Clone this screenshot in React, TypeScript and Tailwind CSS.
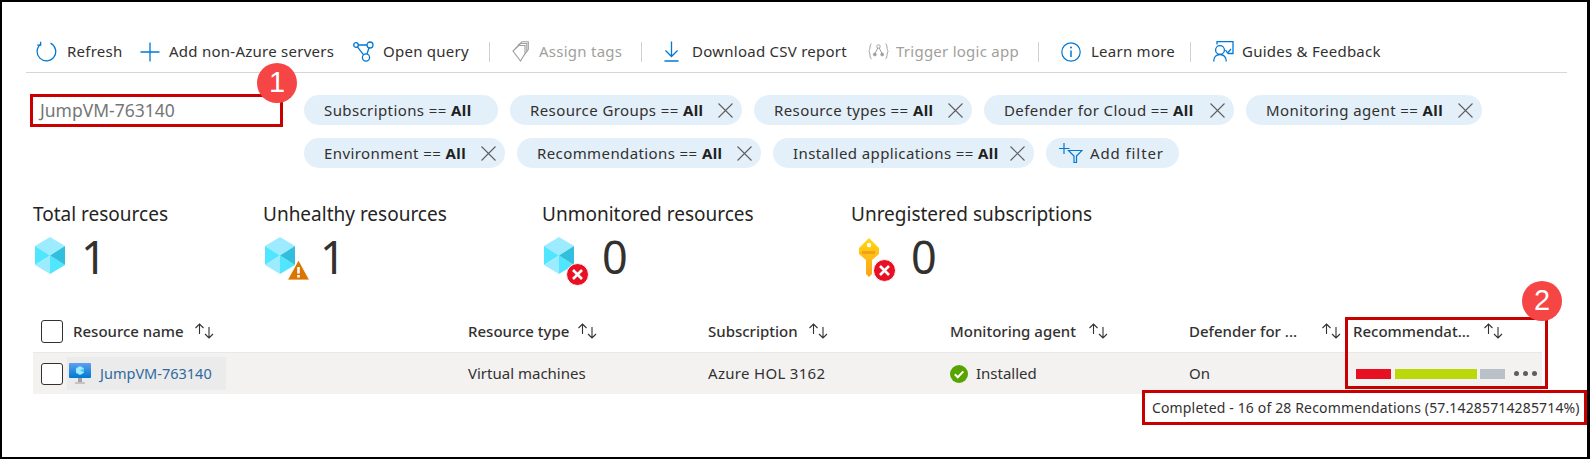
import React from 'react';

const font = { fontFamily: '"Noto Sans", sans-serif' };

const RefreshIcon = () => (
  <svg width="21" height="21" viewBox="0 0 21 21" fill="none" stroke="#0078d4" strokeWidth="1.3">
    <path d="M14.5 2.2A9.3 9.3 0 1 1 5 3" />
    <path d="M4.6 0.8V4.2H1.2" />
  </svg>
);

const PlusIcon = () => (
  <svg width="20" height="20" viewBox="0 0 20 20" stroke="#0078d4" strokeWidth="1.3">
    <path d="M10 0.5V19.5M0.5 10H19.5" />
  </svg>
);

const QueryIcon = () => (
  <svg width="21" height="21" viewBox="0 0 21 21" fill="none" stroke="#0078d4" strokeWidth="1.3">
    <circle cx="3" cy="4" r="2.3" />
    <circle cx="17" cy="4" r="3" />
    <circle cx="13" cy="16.5" r="3.6" />
    <path d="M5.3 4H14M4.4 5.8L10.6 13.8M16 6.8L14 13" />
  </svg>
);

const TagIcon = () => (
  <svg width="17" height="21" viewBox="0 0 17 21" fill="none" stroke="#a19f9d" strokeWidth="1.1">
    <path d="M1 10L6.5 4.5H13V12.5L8.5 20Z" />
    <path d="M3.5 7.5L8.5 2.5H14.8V10.5L13 13" />
    <path d="M6 4.5L10 0.7H16.3V8.5L14.8 10.5" />
  </svg>
);

const DownloadIcon = () => (
  <svg width="15" height="21" viewBox="0 0 15 21" fill="none" stroke="#0078d4" strokeWidth="1.3">
    <path d="M7.5 0.5V15.5M1.5 9.5L7.5 15.5L13.5 9.5" />
    <path d="M0.5 20H14.5" strokeWidth="1.5" />
  </svg>
);

const TriggerIcon = () => (
  <svg width="21" height="17" viewBox="0 0 21 17" fill="none" stroke="#a19f9d" strokeWidth="1">
    <path d="M3.5 0.8C1.5 0.8 2.5 7 0.8 8.2C2.5 9.5 1.5 15.8 3.5 15.8" />
    <path d="M17.5 0.8C19.5 0.8 18.5 7 20.2 8.2C18.5 9.5 19.5 15.8 17.5 15.8" />
    <circle cx="10.5" cy="3.5" r="1.7" />
    <circle cx="6.8" cy="11.5" r="1.4" fill="#a19f9d" />
    <circle cx="14.2" cy="11.5" r="1.4" fill="#a19f9d" />
    <path d="M9.8 5L7.2 10M11.2 5L13.8 10" />
  </svg>
);

const InfoIcon = () => (
  <svg width="20" height="20" viewBox="0 0 20 20" fill="none" stroke="#0078d4" strokeWidth="1.2">
    <circle cx="10" cy="10" r="9.2" />
    <path d="M10 8.5V15" strokeWidth="1.5" />
    <circle cx="10" cy="5.6" r="1" fill="#0078d4" stroke="none" />
  </svg>
);

const GuidesIcon = () => (
  <svg width="21" height="21" viewBox="0 0 21 21" fill="none" stroke="#0078d4" strokeWidth="1.3">
    <path d="M4 3.5V0.7H20V12.5H15" />
    <circle cx="7" cy="9" r="4.4" />
    <path d="M0.7 20.5C0.7 16 3.5 13.5 7 13.5C10.5 13.5 13.3 16 13.3 20.5" />
    <path d="M12.5 9L14.5 12L18 8" />
  </svg>
);

const CloseIcon = () => (
  <svg width="15" height="15" viewBox="0 0 15 15" stroke="#605e5c" strokeWidth="1.1" className="shrink-0">
    <path d="M0.5 0.5L14.5 14.5M14.5 0.5L0.5 14.5" />
  </svg>
);

const AddFilterIcon = () => (
  <svg width="24" height="20" viewBox="0 0 24 20" fill="none" stroke="#0078d4" strokeWidth="1.2" className="shrink-0">
    <path d="M5 0V11M0 5.5H10.5" />
    <path d="M9.5 7.5H23L17.5 13V19.5H15V13Z" />
  </svg>
);

const SortIcon = () => (
  <svg width="21" height="16" viewBox="0 0 21 16" fill="none" stroke="#323130" strokeWidth="1.1" className="shrink-0">
    <path d="M5.5 11V1M1.5 5L5.5 1L9.5 5" />
    <path d="M15 4V15M11 11L15 15L19 11" />
  </svg>
);

const Cube = ({ className = '' }: { className?: string }) => (
  <svg width="32" height="37" viewBox="0 0 32 37" className={className}>
    <polygon points="16,0 31,9 16,18.5 1,9" fill="#9cebff" />
    <polygon points="1,9 16,18.5 1,28" fill="#50e6ff" />
    <polygon points="1,28 16,18.5 16,37" fill="#9cebff" />
    <polygon points="16,18.5 31,28 16,37" fill="#50e6ff" />
    <polygon points="31,9 31,28 16,18.5" fill="#32bedd" />
  </svg>
);

const ErrorBadge = ({ className = '' }: { className?: string }) => (
  <svg width="23" height="23" viewBox="0 0 23 23" className={className}>
    <circle cx="11.5" cy="11.5" r="11" fill="#e81123" stroke="#fff" strokeWidth="1" />
    <path d="M7 7L16 16M16 7L7 16" stroke="#fff" strokeWidth="2.6" />
  </svg>
);

const WarnBadge = () => (
  <svg width="23" height="22" viewBox="0 0 23 22" className="absolute left-[23px] top-[22px]">
    <path d="M11.5 1L22.5 21H0.5Z" fill="#db7500" stroke="#fff" strokeWidth="0.8" />
    <path d="M11.5 8V14.5M11.5 16V18.5" stroke="#fff" strokeWidth="2.6" />
  </svg>
);

const KeyIcon = () => (
  <svg width="24" height="40" viewBox="0 0 24 40">
    <defs>
      <linearGradient id="keyFill" x1="0" y1="0" x2="0" y2="1">
        <stop offset="0" stopColor="#ffd70f" />
        <stop offset="1" stopColor="#fea11b" />
      </linearGradient>
    </defs>
    <path d="M12 1L22 11V17L15 23V37L12 40L9 37V23L2 17V11Z" fill="url(#keyFill)" />
    <circle cx="12" cy="8" r="2.2" fill="#fff" />
    <path d="M5 14H18V17H5Z" fill="#f59e1a" />
  </svg>
);

const VmIcon = () => (
  <svg width="22" height="22" viewBox="0 0 22 22" className="shrink-0">
    <defs>
      <linearGradient id="vmFill" x1="0" y1="0" x2="0" y2="1">
        <stop offset="0" stopColor="#5ea0ef" />
        <stop offset="1" stopColor="#0078d4" />
      </linearGradient>
    </defs>
    <rect x="0" y="0" width="22" height="15" rx="1" fill="url(#vmFill)" />
    <polygon points="11,3 15,5.3 15,9.7 11,12 7,9.7 7,5.3" fill="#9cebff" />
    <polygon points="15,5.3 15,9.7 11,7.5" fill="#50c8e8" />
    <rect x="9" y="15" width="4" height="4" fill="#a3a3a3" />
    <rect x="6" y="19" width="10" height="2" rx="0.5" fill="#c4c4c4" />
  </svg>
);

const CheckIcon = () => (
  <svg width="18" height="18" viewBox="0 0 18 18" className="shrink-0">
    <circle cx="9" cy="9" r="9" fill="#57a300" />
    <path d="M4.8 9.2L7.8 12.2L13.3 6.4" fill="none" stroke="#fff" strokeWidth="2" />
  </svg>
);

const Marker = ({ n, className }: { n: string; className: string }) => (
  <div
    className={`absolute flex h-10 w-10 items-center justify-center rounded-full bg-[#f54545] text-[29px] text-white ${className}`}
    style={{ fontFamily: '"Liberation Sans", sans-serif' }}
  >
    {n}
  </div>
);

const toolbar = [
  { label: 'Refresh', icon: <RefreshIcon />, box: 'w-[104px]', gap: 'gap-[10px]' },
  { label: 'Add non-Azure servers', icon: <PlusIcon />, box: 'w-[213px]', gap: 'gap-[9px]' },
  { label: 'Open query', icon: <QueryIcon />, box: 'w-[136px]', gap: 'gap-[9px]' },
  { sep: true },
  { label: 'Assign tags', icon: <TagIcon />, box: 'w-[129px]', gap: 'gap-[10px]', off: true },
  { sep: true },
  { label: 'Download CSV report', icon: <DownloadIcon />, box: 'w-[204px]', gap: 'gap-[13px]' },
  { label: 'Trigger logic app', icon: <TriggerIcon />, box: 'w-[170px]', gap: 'gap-[7px]', off: true },
  { sep: true },
  { label: 'Learn more', icon: <InfoIcon />, box: 'w-[129px]', gap: 'gap-[10px]' },
  { sep: true },
  { label: 'Guides & Feedback', icon: <GuidesIcon />, box: 'w-[180px]', gap: 'gap-[8px]' },
];

const filters = [
  { name: 'Subscriptions', box: 'w-[194px]', fixed: true },
  { name: 'Resource Groups', box: 'w-[232px]' },
  { name: 'Resource types', box: 'w-[218px]' },
  { name: 'Defender for Cloud', box: 'w-[250px]' },
  { name: 'Monitoring agent', box: 'w-[236px]' },
  { name: 'Environment', box: 'w-[201px]' },
  { name: 'Recommendations', box: 'w-[244px]' },
  { name: 'Installed applications', box: 'w-[261px]' },
];

const stats = [
  { title: 'Total resources', value: '1', box: 'w-[230px]', gap: 'gap-[15px]', icon: <Cube /> },
  {
    title: 'Unhealthy resources',
    value: '1',
    box: 'w-[279px]',
    gap: 'gap-[24px]',
    icon: (
      <div className="relative h-[44px] w-[32px]">
        <Cube />
        <WarnBadge />
      </div>
    ),
  },
  {
    title: 'Unmonitored resources',
    value: '0',
    box: 'w-[309px]',
    gap: 'gap-[27px]',
    icon: (
      <div className="relative h-[44px] w-[32px]">
        <Cube />
        <ErrorBadge className="absolute left-[23px] top-[26px]" />
      </div>
    ),
  },
  {
    title: 'Unregistered subscriptions',
    value: '0',
    box: 'w-[300px]',
    gap: 'gap-[30px]',
    icon: (
      <div className="relative ml-[5px] h-[44px] w-[24px]">
        <KeyIcon />
        <ErrorBadge className="absolute left-[16px] top-[22px]" />
      </div>
    ),
  },
];

const columns = [
  { label: 'Resource type', box: 'w-[240px]', gap: 'gap-[8px]' },
  { label: 'Subscription', box: 'w-[242px]', gap: 'gap-[10px]' },
  { label: 'Monitoring agent', box: 'w-[239px]', gap: 'gap-[12px]' },
  { label: 'Defender for ...', box: 'w-[164px]', gap: 'gap-[24px]' },
  { label: 'Recommendat...', box: 'w-[190px]', gap: 'gap-[13px]' },
];

export default function App() {
  return (
    <div
      className="relative h-[459px] w-[1590px] overflow-hidden border-y-2 border-r-[3px] border-l-2 border-black bg-white text-[14px] text-[#323130]"
      style={font}
    >
      {/* toolbar */}
      <div className="mr-[20px] ml-[24px] flex h-[71px] items-center border-b border-[#d6d6d6] pt-[29px] pl-[10px] text-[15px] tracking-[0.25px]">
        {toolbar.map((item, i) =>
          item.sep ? (
            <div key={i} className="mr-[22px] h-[20px] w-px shrink-0 bg-[#d2d0ce]" />
          ) : (
            <div key={i} className={`flex shrink-0 items-center whitespace-nowrap ${item.box} ${item.gap} ${item.off ? 'text-[#a19f9d]' : ''}`}>
              {item.icon}
              <span>{item.label}</span>
            </div>
          ),
        )}
      </div>

      {/* search and filters */}
      <div className="mt-[21px] ml-[28px] flex items-start">
        <div className="flex h-[33px] w-[253px] shrink-0 items-center border-[3px] border-[#c80000] pl-[7px] text-[17.5px] text-[#767676]">
          JumpVM-763140
        </div>
        <div className="mt-[1px] ml-[21px] flex w-[1230px] flex-wrap gap-x-3 gap-y-[13px] text-[15px] tracking-[0.4px]">
          {filters.map((f) => (
            <div
              key={f.name}
              className={`flex h-[30px] items-center justify-between rounded-full bg-[#e3f0fa] pr-[9px] pl-[20px] whitespace-nowrap ${f.box}`}
            >
              <span>
                {f.name} == <b className="font-bold text-[#201f1e]">All</b>
              </span>
              {!f.fixed && <CloseIcon />}
            </div>
          ))}
          <div className="flex h-[30px] w-[133px] items-center gap-[7px] rounded-full bg-[#e3f0fa] pl-[13px] tracking-[0.9px] whitespace-nowrap">
            <AddFilterIcon />
            <span>Add filter</span>
          </div>
        </div>
      </div>

      {/* summary */}
      <div className="mt-[34px] ml-[31px] flex">
        {stats.map((s) => (
          <div key={s.title} className={`shrink-0 ${s.box}`}>
            <div className="h-[24px] text-[19px] leading-[24px] whitespace-nowrap text-[#252423]">{s.title}</div>
            <div className={`mt-[11px] ml-[1px] flex h-[44px] items-start ${s.gap}`}>
              {s.icon}
              <span className="-mt-[7px] text-[45px] leading-[54px]">{s.value}</span>
            </div>
          </div>
        ))}
      </div>

      {/* table */}
      <div className="mt-[34px] ml-[31px] w-[1509px]">
        <div className="flex h-[38px] items-center border-b border-[#e8e8e8] pb-[5px] pl-[8px] text-[15px] font-medium">
          <div className="flex w-[427px] shrink-0 items-center">
            <div className="h-[23px] w-[22px] shrink-0 rounded-[3px] border border-[#323130]" />
            <span className="ml-[10px] whitespace-nowrap">Resource name</span>
            <span className="ml-[10px]">
              <SortIcon />
            </span>
          </div>
          {columns.map((c) => (
            <div key={c.label} className={`flex shrink-0 items-center whitespace-nowrap ${c.box} ${c.gap}`}>
              <span>{c.label}</span>
              <SortIcon />
            </div>
          ))}
        </div>
        <div className="flex h-[41px] items-center bg-[#f3f2f1] pl-[8px] text-[15px]">
          <div className="flex w-[427px] shrink-0 items-center">
            <div className="h-[22px] w-[22px] shrink-0 rounded-[3px] border border-[#323130] bg-white" />
            <div className="ml-[4px] flex h-[33px] w-[159px] items-center gap-[9px] bg-[#ebebeb] pl-[2px] text-[14.5px] whitespace-nowrap text-[#2f6a9e]">
              <VmIcon />
              <span>JumpVM-763140</span>
            </div>
          </div>
          <div className="w-[240px] shrink-0">Virtual machines</div>
          <div className="w-[242px] shrink-0 tracking-[0.3px]">Azure HOL 3162</div>
          <div className="flex w-[239px] shrink-0 items-center gap-[8px]">
            <CheckIcon />
            <span>Installed</span>
          </div>
          <div className="w-[167px] shrink-0">On</div>
          <div className="flex shrink-0 items-center">
            <div className="h-[10px] w-[35px] bg-[#e81123]" />
            <div className="ml-[4px] h-[10px] w-[82px] bg-[#bad80a]" />
            <div className="ml-[3px] h-[10px] w-[25px] bg-[#b9c0c8]" />
            <div className="ml-[9px] flex gap-[4px]">
              <span className="h-[5px] w-[5px] rounded-full bg-[#605e5c]" />
              <span className="h-[5px] w-[5px] rounded-full bg-[#605e5c]" />
              <span className="h-[5px] w-[5px] rounded-full bg-[#605e5c]" />
            </div>
          </div>
        </div>
      </div>

      {/* annotations over the page */}
      <div className="absolute top-[315px] left-[1343px] h-[72px] w-[203px] border-[3px] border-[#c80000]" />
      <div className="absolute top-[388px] left-[1140px] flex h-[35px] w-[445px] items-center border-[3px] border-[#c80000] bg-white pl-[7px] tracking-[0.15px] whitespace-nowrap">
        Completed - 16 of 28 Recommendations (57.14285714285714%)
      </div>
      <Marker n="1" className="top-[61px] left-[255px]" />
      <Marker n="2" className="top-[279px] left-[1520px]" />
    </div>
  );
}
